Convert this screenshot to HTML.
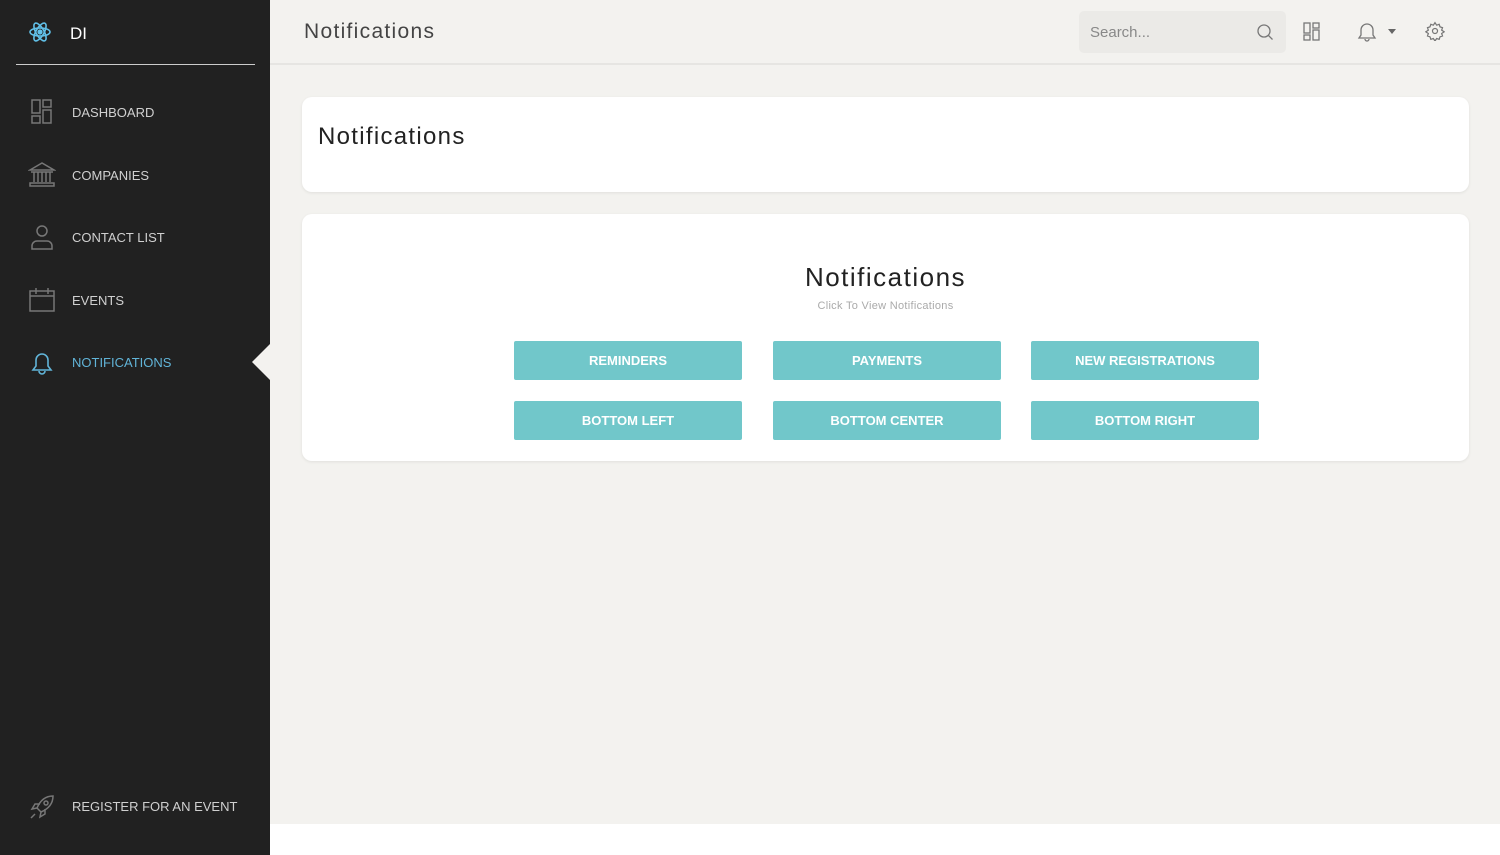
<!DOCTYPE html>
<html><head><style>
*{margin:0;padding:0;box-sizing:border-box}
body{width:1500px;height:855px;background:#fff;font-family:"Liberation Sans",sans-serif;position:relative;overflow:hidden}
.sb{position:absolute;left:0;top:0;width:270px;height:855px;background:#212121}
.logo{position:absolute;left:28px;top:20px}
.di{position:absolute;left:70px;top:24px;color:#fff;font-size:17px}
.hr{position:absolute;left:16px;top:64px;width:239px;height:1px;background:#ccc}
.it{position:absolute;left:72px;color:#d0d0d0;font-size:13px;letter-spacing:0}
.ic{position:absolute;left:28px}
.main{position:absolute;left:270px;top:0;width:1230px;height:824px;background:#f3f2ef}
.top{height:65px;border-bottom:2px solid #e6e5e2}
.title{position:absolute;left:34px;top:20px;font-size:21px;color:#444;letter-spacing:1.3px}
.search{position:absolute;left:809px;top:11px;width:207px;height:42px;background:#ebeae7;border-radius:5px;color:#888;font-size:15px;padding:13px 11px}
.card{position:absolute;background:#fff;border-radius:10px;box-shadow:0 1px 3px rgba(0,0,0,.08)}
.btn{position:absolute;width:228px;height:39px;background:#71c7ca;color:#fff;font-weight:bold;font-size:13px;text-align:center;line-height:39px;border-radius:2px}
</style></head><body>
<div class="sb">
<svg class="logo" width="24" height="24" viewBox="0 0 24 24" fill="none" stroke="#61c0e8" stroke-width="1.6"><ellipse cx="12" cy="12" rx="10" ry="4"/><ellipse cx="12" cy="12" rx="10" ry="4" transform="rotate(60 12 12)"/><ellipse cx="12" cy="12" rx="10" ry="4" transform="rotate(120 12 12)"/><circle cx="12" cy="12" r="1.8" fill="#61c0e8"/></svg>
<div class="di">DI</div><div class="hr"></div>
<svg class="ic" style="top:99px" width="26" height="26" viewBox="0 0 26 26" fill="none" stroke="#777" stroke-width="1.5"><rect x="4" y="1" width="8" height="13"/><rect x="15" y="1" width="8" height="7"/><rect x="4" y="17" width="8" height="7"/><rect x="15" y="11" width="8" height="13"/></svg>
<div class="it" style="top:105px">DASHBOARD</div>
<svg class="ic" style="top:162px" width="28" height="26" viewBox="0 0 28 26" fill="none" stroke="#777" stroke-width="1.5"><path d="M2 8L14 1 26 8Z M3 10h22 M6 10v10 M10 10v10 M14 10v10 M18 10v10 M22 10v10 M2 21h24v3H2z"/></svg>
<div class="it" style="top:168px">COMPANIES</div>
<svg class="ic" style="top:224px" width="28" height="26" viewBox="0 0 28 26" fill="none" stroke="#777" stroke-width="1.5"><circle cx="14" cy="7" r="5"/><path d="M4 25v-3a5 5 0 0 1 5-5h10a5 5 0 0 1 5 5v3z"/></svg>
<div class="it" style="top:230px">CONTACT LIST</div>
<svg class="ic" style="top:287px" width="28" height="26" viewBox="0 0 28 26" fill="none" stroke="#777" stroke-width="1.5"><rect x="2" y="4" width="24" height="20"/><path d="M2 9h24 M8 1v6 M20 1v6"/></svg>
<div class="it" style="top:293px">EVENTS</div>
<svg class="ic" style="top:348px" width="28" height="28" viewBox="0 0 28 28" fill="none" stroke="#61b4d8" stroke-width="1.6"><path d="M5 22h18l-3-4V12a6 6 0 0 0-12 0v6z M11 23a3 3 0 0 0 6 0"/></svg>
<div class="it" style="top:355px;color:#61b4d8">NOTIFICATIONS</div>
<div style="position:absolute;left:252px;top:344px;border-right:18px solid #f3f2ef;border-top:18px solid transparent;border-bottom:18px solid transparent"></div>
<svg class="ic" style="top:793px" width="28" height="28" viewBox="0 0 28 28" fill="none" stroke="#777" stroke-width="1.5"><path d="M25 3c-8 0-13 5-16 12l4 4c7-3 12-8 12-16z M9 15l-5 1 3-5h5 M13 19l-1 5 5-3v-5 M7 21l-4 4"/><circle cx="18" cy="10" r="2"/></svg>
<div class="it" style="top:799px">REGISTER FOR AN EVENT</div>
</div>
<div class="main">
<div class="top"></div>
<div class="title">Notifications</div>
<div class="search">Search...</div>
<svg style="position:absolute;left:986px;top:23px" width="18" height="18" viewBox="0 0 18 18" fill="none" stroke="#777" stroke-width="1.3"><circle cx="8" cy="8" r="6"/><path d="M12.5 12.5l4 4"/></svg>
<svg style="position:absolute;left:1033px;top:22px" width="18" height="20" viewBox="0 0 18 20" fill="none" stroke="#777" stroke-width="1.3"><rect x="1" y="1" width="6" height="10"/><rect x="10" y="1" width="6" height="5"/><rect x="1" y="13" width="6" height="5"/><rect x="10" y="8" width="6" height="10"/></svg>
<svg style="position:absolute;left:1087px;top:21px" width="20" height="22" viewBox="0 0 20 22" fill="none" stroke="#777" stroke-width="1.3"><path d="M2 17h16l-2-3V9a6 6 0 0 0-12 0v5z M8 18a2 2 0 0 0 4 0"/></svg>
<div style="position:absolute;left:1118px;top:29px;border-top:5px solid #666;border-left:4px solid transparent;border-right:4px solid transparent"></div>
<svg style="position:absolute;left:1155px;top:21px" width="20" height="20" viewBox="0 0 24 24" fill="none" stroke="#777" stroke-width="1.5"><circle cx="12" cy="12" r="3"/><path d="M12 2l2 3 3-1 1 3 3 1-1 3 3 2-3 2 1 3-3 1-1 3-3-1-2 3-2-3-3 1-1-3-3-1 1-3-3-2 3-2-1-3 3-1 1-3 3 1z"/></svg>
<div class="card" style="left:32px;top:97px;width:1167px;height:95px"><div style="position:absolute;left:16px;top:26px;font-size:24px;color:#222;letter-spacing:1.3px">Notifications</div></div>
<div class="card" style="left:32px;top:214px;width:1167px;height:247px">
<div style="position:absolute;width:100%;top:48px;text-align:center;font-size:26px;color:#222;letter-spacing:1.5px">Notifications</div>
<div style="position:absolute;width:100%;top:86px;text-align:center;font-size:11px;color:#aaa;letter-spacing:.3px">Click To View Notifications</div>
<div class="btn" style="left:212px;top:127px">REMINDERS</div>
<div class="btn" style="left:471px;top:127px">PAYMENTS</div>
<div class="btn" style="left:729px;top:127px">NEW REGISTRATIONS</div>
<div class="btn" style="left:212px;top:187px">BOTTOM LEFT</div>
<div class="btn" style="left:471px;top:187px">BOTTOM CENTER</div>
<div class="btn" style="left:729px;top:187px">BOTTOM RIGHT</div>
</div>
</div>
</body></html>
